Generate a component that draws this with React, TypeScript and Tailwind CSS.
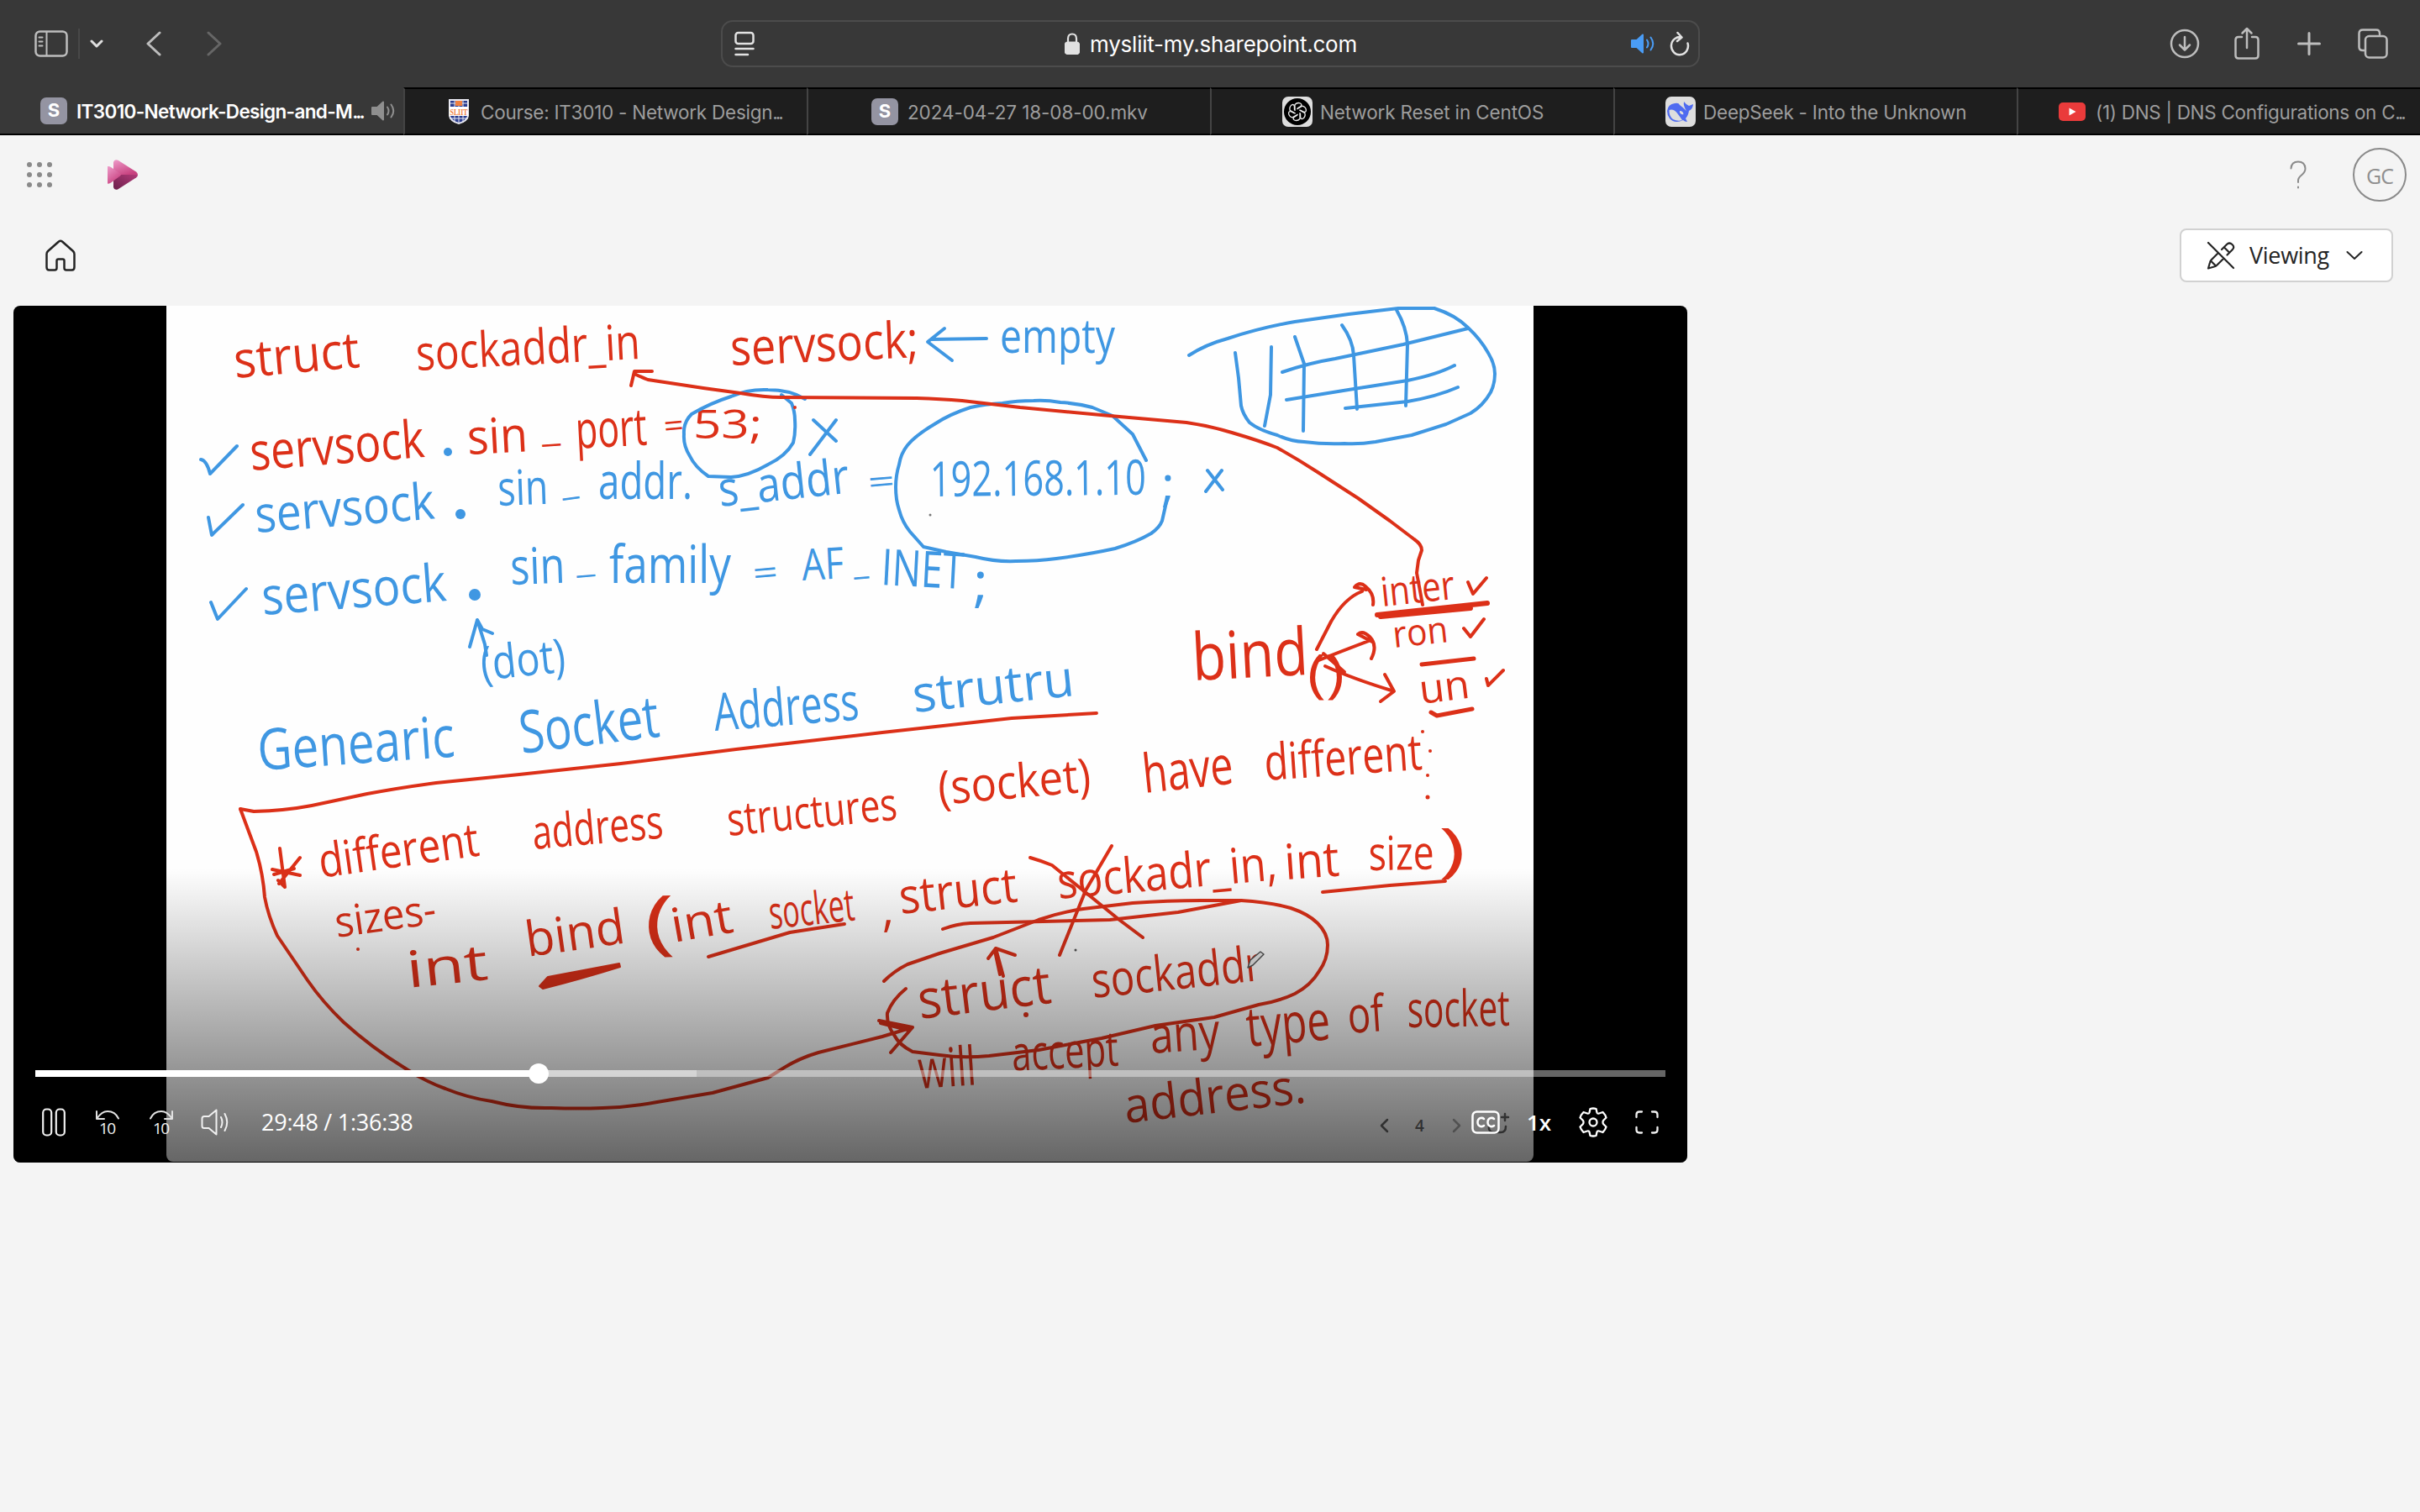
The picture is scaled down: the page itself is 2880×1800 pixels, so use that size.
import React from "react";

const RED = "#dc3018";
const BLUE = "#3f97e2";

type Word = [text: string, x: number, y: number, width: number, angle: number, size: number, color?: string];

const words: Word[] = [
  ["struct", 280, 450, 150, -5, 60],
  ["sockaddr_in", 496, 441, 267, -3, 58],
  ["servsock;", 870, 435, 224, -2.5, 60],
  ["empty", 1190, 420, 137, 0, 56, BLUE],
  ["servsock", 299, 560, 208, -4.4, 62],
  ["sin", 557, 541, 72, -3, 58],
  ["_", 645, 526, 22, -4, 40],
  ["port", 686, 534, 85, -3, 62],
  ["=", 791, 521, 24, -5, 38],
  ["53;", 825, 522, 82, 0, 48],
  ["servsock", 305, 634, 214, -4.5, 60, BLUE],
  ["sin", 593, 602, 60, -2, 58, BLUE],
  ["_", 669, 590, 20, -8, 40, BLUE],
  ["addr.", 712, 594, 112, 0, 60, BLUE],
  ["s_addr", 857, 603, 156, -6, 58, BLUE],
  ["=", 1034, 588, 32, -5, 38, BLUE],
  ["192.168.1.10", 1107, 591, 257, -0.5, 58, BLUE],
  [";", 1382, 596, 16, 0, 56, BLUE],
  ["servsock", 313, 732, 220, -4.4, 62, BLUE],
  ["sin", 608, 696, 65, -2, 60, BLUE],
  ["_", 686, 682, 22, -5, 40, BLUE],
  ["family", 725, 694, 145, 0, 62, BLUE],
  ["=", 897, 697, 30, -5, 40, BLUE],
  ["AF", 955, 691, 50, -3, 52, BLUE],
  ["_", 1016, 684, 18, -5, 40, BLUE],
  ["INET", 1048, 696, 98, 3, 60, BLUE],
  [";", 1158, 715, 18, 0, 64, BLUE],
  ["(dot)", 574, 810, 101, -6, 56, BLUE],
  ["Genearic", 308, 917, 235, -4, 68, BLUE],
  ["Socket", 621, 897, 167, -7, 70, BLUE],
  ["Address", 851, 870, 173, -4.5, 62, BLUE],
  ["strutru", 1088, 848, 193, -6, 60, BLUE],
  ["different", 382, 1045, 192, -8, 56],
  ["address", 635, 1011, 156, -5, 56],
  ["structures", 867, 995, 203, -5.5, 54],
  ["(socket)", 1118, 958, 182, -5, 56],
  ["have", 1362, 944, 108, -6, 64],
  ["different", 1506, 929, 188, -4, 60],
  ["sizes-", 401, 1116, 121, -8, 50],
  ["int", 486, 1176, 97, -6, 60],
  ["bind", 628, 1139, 119, -8, 58],
  ["(", 768, 1127, 36, -2, 84],
  ["int", 802, 1122, 74, -10, 56],
  ["socket", 917, 1106, 102, -6, 54],
  [",", 1050, 1102, 14, 0, 60],
  ["struct", 1072, 1088, 141, -6, 58],
  ["sockadr_in,", 1260, 1070, 262, -5, 58],
  ["int", 1530, 1047, 65, -4, 58],
  ["size", 1629, 1036, 78, -1, 56],
  [")", 1712, 1036, 32, 0, 70],
  ["struct", 1095, 1213, 159, -7, 64],
  ["sockaddr", 1301, 1188, 203, -6, 58],
  ["will", 1094, 1296, 69, -4, 64],
  ["accept", 1205, 1275, 127, -3, 58],
  ["any", 1370, 1254, 83, -4, 60],
  ["type", 1485, 1246, 100, -5, 66],
  ["of", 1605, 1230, 43, -4, 60],
  ["socket", 1675, 1223, 122, -1, 60],
  ["address.", 1340, 1337, 217, -6.5, 58],
  ["bind", 1420, 810, 138, -3, 78],
  ["()", 1556, 824, 44, 0, 62],
  ["inter", 1645, 722, 88, -6, 48],
  ["ron", 1659, 771, 66, -6, 44],
  ["un", 1691, 838, 60, -7, 48],
];

const redStrokes = [
  "M776 442L755 442L751 459M755 445Q763 449 771 452L837 462L881 468Q910 473 930 473L1091 474Q1120 475 1145 477L1214 485L1321 495L1412 503Q1440 507 1466 515Q1500 525 1520 533Q1545 547 1568 562L1616 593L1654 620L1683 642Q1692 648 1692 655L1688 667L1686 682L1693 720",
  "M286 963L302 966Q340 965 371 959L437 945Q480 937 519 932L618 922L739 909L876 892L1050 872L1204 855L1305 849",
  "M286 963L305 1014Q313 1040 315 1068Q319 1090 330 1114L366 1167Q384 1193 409 1217Q442 1247 481 1271Q505 1287 530 1296Q557 1307 585 1311Q620 1320 656 1319Q688 1320 717 1319Q750 1318 782 1312L848 1301L914 1283L930 1273Q950 1260 974 1253L1050 1234L1086 1223M1046 1215L1086 1223L1060 1253M1048 1218L1080 1226",
  "M333 1010L339 1056L331 1048M357 1021L332 1052M324 1035L357 1042M326 1041L350 1034",
  "M843 1139L940 1110L1005 1100",
  "M1574 1062L1654 1054L1720 1049",
  "M1226 1021Q1240 1025 1252 1030L1289 1060L1332 1095L1360 1116M1323 1007L1292 1060L1261 1137",
  "M1122 1106Q1138 1100 1155 1099L1241 1097L1321 1095L1402 1086L1477 1072",
  "M1052 1168Q1064 1156 1080 1148L1118 1135L1182 1116L1236 1095Q1262 1086 1289 1082L1348 1075Q1390 1072 1429 1072L1477 1072Q1512 1074 1536 1081Q1557 1088 1568 1099Q1580 1111 1580 1125Q1580 1142 1570 1156Q1560 1173 1541 1183Q1522 1192 1498 1196L1445 1211L1375 1221L1311 1236L1236 1250L1177 1257Q1145 1260 1118 1256L1086 1252Q1070 1244 1064 1232Q1055 1220 1056 1206Q1062 1190 1078 1177",
  "M1194 1162L1185 1129L1176 1141M1185 1129L1208 1137M1190 1160L1184 1132",
  "M1567 773L1584 740Q1600 712 1621 704M1612 699Q1618 692 1625 698Q1636 707 1634 720M1612 699L1626 702",
  "M1567 787Q1600 774 1629 763M1616 755Q1622 750 1630 758Q1640 768 1632 784M1616 755L1633 764",
  "M1575 778L1600 800M1577 793Q1610 808 1659 823M1648 803L1659 823L1643 835",
  "M1747 693L1753 707L1769 688M1742 748L1750 758L1766 737M1769 808L1771 816L1789 798",
];

const blueStrokes = [
  "M1174 403L1108 404M1124 391L1104 407L1133 429",
  "M239 547Q246 548 250 564L282 531M248 616L252 637L289 601M251 717L259 737L293 701",
  "M930 470L942 480Q946 490 946 500Q947 515 944 527Q935 543 914 553Q890 567 870 568L843 567Q827 556 821 543Q813 530 814 517Q813 503 823 493Q845 480 870 472Q890 463 914 464Q940 464 958 475",
  "M968 500L995 525M995 500L964 541M1437 560L1455 583M1454 560L1435 585",
  "M1364 548L1348 517L1324 495L1300 485Q1280 480 1262 479Q1245 476 1230 477Q1210 477 1193 480Q1172 481 1155 485Q1130 493 1112 505Q1090 518 1080 530Q1072 540 1070 553Q1066 566 1066 580Q1066 595 1070 607Q1074 622 1083 633L1099 651L1126 657L1161 663Q1185 669 1209 668Q1235 668 1257 665Q1295 660 1327 653Q1353 645 1370 635Q1380 628 1383 620L1388 598",
  "M579 780L577 767L568 738L559 770M568 738L574 749L586 754",
  "M1415 423Q1435 410 1461 403Q1500 390 1541 383L1605 374L1664 367L1707 367Q1732 375 1747 390Q1762 404 1771 420Q1779 433 1779 445Q1779 457 1774 467Q1765 483 1750 492L1721 505L1680 518L1637 526Q1618 529 1600 528Q1575 529 1552 526Q1535 525 1520 518Q1498 512 1487 503Q1479 493 1477 483L1474 450L1470 420",
  "M1513 413L1512 470L1505 507M1541 401L1552 433L1551 513M1597 387Q1610 405 1611 423L1615 487M1662 369Q1674 390 1675 410L1673 483",
  "M1526 443Q1558 432 1589 427L1670 410L1747 391M1531 476L1611 463L1675 453Q1710 446 1731 435M1601 486L1675 478Q1710 472 1735 461",
];

const dots: [number, number, number, string][] = [
  [533, 538, 5, BLUE], [548, 612, 6, BLUE], [565, 708, 7, BLUE], [946, 485, 2, RED],
  [1693, 871, 2, RED], [1702, 894, 2, RED], [1699, 923, 2, RED], [1699, 949, 2.5, RED],
  [426, 1130, 2, RED], [1221, 1208, 3, RED], [1107, 613, 1.5, "#777"], [1280, 1131, 1.5, "#555"],
];

function Whiteboard() {
  return (
    <svg viewBox="198 364 1627 1019" className="block h-[1019px] w-[1627px] rounded-b-lg bg-[#fefefe]" fill="none" strokeLinecap="round" strokeLinejoin="round">
      <g fontFamily='"Open Sans", sans-serif' fontWeight="400">
        {words.map(([t, x, y, w, a, s, c = RED], i) => (
          <text key={i} x={x} y={y} fontSize={s} fill={c} textLength={w} lengthAdjust="spacingAndGlyphs" transform={`rotate(${a} ${x} ${y})`}>{t}</text>
        ))}
      </g>
      <g stroke={BLUE} strokeWidth="4">{blueStrokes.map((d) => <path key={d} d={d} />)}</g>
      <g stroke={RED} strokeWidth="4">{redStrokes.map((d) => <path key={d} d={d} />)}</g>
      <path d="M642 1174L652 1163L737 1147L738 1151Q690 1166 646 1177Z" fill={RED} stroke={RED} strokeWidth="2" />
      <path d="M1639 732L1770 718M1643 734L1750 724" stroke={RED} strokeWidth="6" />
      <path d="M1692 791L1754 784M1703 848L1710 852L1752 844" stroke={RED} strokeWidth="5" />
      {dots.map(([x, y, r, c], i) => <circle key={i} cx={x} cy={y} r={r} fill={c} />)}
      <path d="M1485 1152L1488 1143L1500 1133L1504 1136L1491 1149Z" fill="#eee" stroke="#555" strokeWidth="1.5" />
      <g stroke="#666" strokeWidth="2.5">
        <path d="M1651 1333L1644 1340L1651 1347" />
        <path d="M1730 1333L1737 1340L1730 1347" stroke="#aaa" />
        <path d="M1791 1326V1334M1787 1330H1795M1772 1340V1344Q1773 1348 1778 1348H1786Q1792 1348 1792 1341" />
      </g>
      <text x="1684" y="1347" fontSize="19" fontWeight="600" fill="#666" fontFamily='"Open Sans", sans-serif'>4</text>
    </svg>
  );
}

function Ico({ w, h, className = "", children, sw = 2.5 }: { w: number; h: number; className?: string; children: React.ReactNode; sw?: number }) {
  return (
    <svg width={w} height={h} viewBox={`0 0 ${w} ${h}`} className={`shrink-0 ${className}`} fill="none" stroke="currentColor" strokeWidth={sw} strokeLinecap="round" strokeLinejoin="round">
      {children}
    </svg>
  );
}

function Speaker({ className }: { className: string }) {
  return (
    <Ico w={30} h={24} className={className} sw={2}>
      <path d="M1 8H7L14 1.5V22.5L7 16H1Z" fill="currentColor" />
      <path d="M19 7.5Q22 12 19 16.5M23.5 4.5Q29 12 23.5 19.5" />
    </Ico>
  );
}

function Toolbar() {
  return (
    <div className="flex h-[104px] items-center bg-[#383838] text-[#bdbdbd]">
      <Ico w={40} h={32} className="ml-[41px]">
        <rect x="1.5" y="1.5" width="37" height="29" rx="5" />
        <path d="M14.500 2V30M5.500 8.500H9.500M5.500 13.500H9.500M5.500 18.500H9.500" strokeWidth="2" />
      </Ico>
      <div className="ml-[12px] h-9 w-[2px] bg-[#484848]" />
      <Ico w={16} h={12} className="ml-[12px] text-[#e0e0e0]" sw={3}><path d="M2 3L8 9L14 3" /></Ico>
      <Ico w={18} h={30} className="ml-[51px]" sw={3}><path d="M16 2L2 15L16 28" /></Ico>
      <Ico w={18} h={30} className="ml-[54px] text-[#666]" sw={3}><path d="M2 2L16 15L2 28" /></Ico>
      <div className="ml-[594px] flex h-14 w-[1165px] items-center rounded-[14px] border-2 border-[#4c4c4c] text-[#e2e2e2]">
        <Ico w={24} h={30} className="ml-[14px]">
          <rect x="1.5" y="2" width="21" height="13" rx="3" />
          <path d="M1.500 21H22.500M1.500 28H16" />
        </Ico>
        <Ico w={18} h={26} className="ml-[369px]" sw={2.2}>
          <path d="M4 12V7Q4 1.500 9 1.500T14 7V12" />
          <rect x="1" y="11.500" width="16" height="13.500" rx="2.500" fill="currentColor" />
        </Ico>
        <span className="ml-[12px] w-[318px] whitespace-nowrap font-['Inter'] text-[26px] tracking-[-0.220px] text-white">mysliit-my.sharepoint.com</span>
        <Speaker className="ml-[326px] text-[#4a9cf5]" />
        <Ico w={24} h={30} className="ml-[16px]">
          <path d="M21.500 14.500A10 10.500 0 1 1 14.500 7.500L9.500 2M14.500 7.500L9 12" />
        </Ico>
      </div>
      <Ico w={36} h={36} className="ml-[559px]">
        <circle cx="18" cy="18" r="16" />
        <path d="M18 10V25M12 19.500L18 25.500L24 19.500" />
      </Ico>
      <Ico w={30} h={40} className="ml-[41px]">
        <path d="M9 12H5Q1.500 12 1.500 15.500V34Q1.500 37.500 5 37.500H25Q28.500 37.500 28.500 34V15.500Q28.500 12 25 12H21M15 25V2.500M9.500 7.500L15 2L20.500 7.500" />
      </Ico>
      <Ico w={28} h={28} className="ml-[45px]" sw={3}><path d="M14 1.500V26.500M1.500 14H26.500" /></Ico>
      <Ico w={36} h={36} className="ml-[44px]">
        <path d="M8 26H6Q1.500 26 1.500 22V6Q1.500 1.500 6 1.500H22Q26 1.500 26 6V7" />
        <rect x="9" y="9" width="25.500" height="25.500" rx="4.500" />
      </Ico>
    </div>
  );
}

function LetterIcon() {
  return <span className="flex h-8 w-8 shrink-0 items-center justify-center rounded-[7px] bg-[#9494a2] font-['Inter'] text-[22px] font-bold text-white">S</span>;
}

type TabProps = { icon: React.ReactNode; label: string; cut?: boolean; pad: string; gap: string; spacing: string; active?: boolean };

function Tab({ icon, label, cut, pad, gap, spacing, active }: TabProps) {
  return (
    <div className={`flex h-[57px] w-[480px] shrink-0 items-center whitespace-nowrap border-b-2 border-black font-['Inter'] text-[22.500px] ${pad} ${gap} ${active ? "bg-[#383838] font-semibold text-white" : "border-l-2 border-t-2 border-l-[#444] border-t-black bg-[#1e1e1e] text-[#9d9d9d]"}`}>
      {icon}
      <span className={`pt-[2px] ${spacing}`}>
        {label}
        {cut && <span className="tracking-[-3px]">...</span>}
      </span>
      {active && <Speaker className="text-[#8f8f8f]" />}
    </div>
  );
}

function TabBar() {
  return (
    <div className="flex h-[57px] overflow-hidden bg-[#1e1e1e]">
      <Tab active cut icon={<LetterIcon />} label="IT3010-Network-Design-and-M" pad="pl-[48px]" gap="gap-[11px]" spacing="w-[340px] tracking-[-0.640px]" />
      <Tab
        cut
        icon={
          <svg width="24" height="30" viewBox="0 0 24 30" className="shrink-0">
            <path d="M0 0H24V20Q23 27 12 30Q1 27 0 20Z" fill="#e9e9f2" />
            <path d="M2 2H22V20Q21 25 12 28Q3 25 2 20Z" fill="#2a3c8f" />
            <path d="M7 1V28M12 1V29M17 1V28M1 5H23M1 23H23" stroke="#e9e9f2" strokeWidth="1" />
            <rect x="8" y="2" width="8" height="6" fill="#f08040" />
            <rect x="1" y="9" width="22" height="11" fill="#fff" />
            <text x="1.500" y="19" fontSize="11" fontWeight="700" textLength="21" lengthAdjust="spacingAndGlyphs" fill="#f08040" fontFamily='"Liberation Serif", serif'>SLIIT</text>
          </svg>
        }
        label="Course: IT3010 - Network Design" pad="pl-[52px]" gap="gap-[14px]" spacing="tracking-[-0.250px]" />
      <Tab icon={<LetterIcon />} label="2024-04-27 18-08-00.mkv" pad="pl-[75px]" gap="gap-[11px]" spacing="tracking-[-0.100px]" />
      <Tab
        icon={
          <svg width="36" height="36" viewBox="0 0 36 36" className="shrink-0" fill="none">
            <rect width="36" height="36" rx="7" fill="#dedede" />
            <circle cx="18" cy="18" r="16" fill="#000" />
            <g stroke="#eee" strokeWidth="1.300">
              {[0, 60, 120, 180, 240, 300].map((a) => (
                <path key={a} d="M18 14L22 11.500Q24 9.500 21.500 8Q18 6.500 15 9.500V17" transform={`rotate(${a} 18 18)`} />
              ))}
            </g>
          </svg>
        }
        label="Network Reset in CentOS" pad="pl-[84px]" gap="gap-[9px]" spacing="tracking-[-0.150px]" />
      <Tab
        icon={
          <svg width="36" height="36" viewBox="0 0 36 36" className="shrink-0">
            <rect width="36" height="36" rx="7" fill="#dedede" />
            <path d="M2 17Q3 9 11 8Q16 7 17 10Q21 13 25 17Q21 11 22 6Q25 10 28 11L33 9Q33 14 28 17Q27 23 24 26L26 30Q23 30 21 28Q11 33 5 26Q2 22 2 17Z" fill="#4f6bf0" />
            <path d="M4.500 16Q10 14 15 21Q18 25 20 28Q15 30 9 27Q4 23 4.500 16ZM17 17Q21 17 21.500 21Q19 22 17 19Z" fill="#dedede" />
          </svg>
        }
        label="DeepSeek - Into the Unknown" pad="pl-[60px]" gap="gap-[9px]" spacing="tracking-[-0.220px]" />
      <Tab
        cut
        icon={
          <svg width="32" height="22" viewBox="0 0 32 22" className="shrink-0">
            <rect width="32" height="22" rx="5" fill="#ea3b3b" />
            <path d="M12.500 6.500L20.500 11L12.500 15.500Z" fill="#fff" />
          </svg>
        }
        label="(1) DNS | DNS Configurations on C" pad="pl-[48px]" gap="gap-[12px]" spacing="tracking-[-0.300px]" />
    </div>
  );
}

function AppHeader() {
  return (
    <header className="flex h-[94px] items-center">
      <div className="ml-8 grid grid-cols-3 gap-1.5">
        {Array.from({ length: 9 }, (_, i) => <span key={i} className="h-1.5 w-1.5 rounded-full bg-[#8a8a8a]" />)}
      </div>
      <svg width="37" height="36" viewBox="0 0 37 36" className="ml-[66px]">
        <defs>
          <linearGradient id="top" x1="0" y1="0" x2="0.6" y2="1"><stop stopColor="#ee9cca" /><stop offset="1" stopColor="#c8417f" /></linearGradient>
          <linearGradient id="low" x1="1" y1="0" x2="0" y2="1"><stop stopColor="#b23a78" /><stop offset="1" stopColor="#6b1f4b" /></linearGradient>
        </defs>
        <path d="M7 3Q8-1 12.500 0.700L34 14.500Q36 16 36 18H7Z" fill="url(#top)" />
        <path d="M7 33Q8 37 12.500 35.300L34 21.500Q36 20 36 18H7Z" fill="url(#low)" />
        <path d="M0 8Q2 7.500 4 9L15 16.500Q17 18 15 19.500L4 27.500Q2 29 0 28.500Z" fill="url(#top)" />
      </svg>
      <Ico w={20} h={34} className="ml-auto mr-[55px] text-[#8a8a8a]" sw={2}>
        <path d="M1.500 9.500Q2 1.500 10 1.500T18.500 9.500Q18.500 14 14 17.500T10 25V26M10 31.500V32.500" />
      </Ico>
      <div className="mr-4 flex h-16 w-16 items-center justify-center rounded-full border-2 border-[#8a8a8a] pt-1 font-['Open_Sans'] text-[25px] tracking-[-1px] text-[#8f8f8f]">GC</div>
    </header>
  );
}

function CommandBar() {
  return (
    <div className="flex h-[109px] items-center justify-between pb-[11px] pl-[54px] pr-8">
      <Ico w={36} h={38} className="text-[#242424]">
        <path d="M16 2.500Q18 1 20 2.500L33 14Q34.500 15.500 34.500 17.500V33Q34.500 36.500 31.500 36.500H25Q22.500 36.500 22.500 34V25.500Q22.500 23.500 20.500 23.500H15.500Q13.500 23.500 13.500 25.500V34Q13.500 36.500 11 36.500H4.500Q1.500 36.500 1.500 33V17.500Q1.500 15.500 3 14Z" />
      </Ico>
      <button className="flex h-16 w-[254px] items-center rounded-lg border-2 border-[#d1d1d1] bg-white pl-[30px] font-['Open_Sans'] text-[27px] text-[#242424]">
        <Ico w={34} h={34} sw={2.2}>
          <path d="M2 2L32 32M18 10L24 4Q27 1 30.500 4T30.500 10.500L24.500 16.500M21 7.500L27 13.500M14 14L6 22Q4.500 23.500 4 25.500L2 32.500L9 30.500Q11 30 12.500 28.500L20.500 20.500M5 23.500L11 29.500" />
        </Ico>
        <span className="ml-4 w-[97px] tracking-[-0.300px]">Viewing</span>
        <Ico w={20} h={12} className="ml-[19px]" sw={2}><path d="M1.500 2L10 10L18.500 2" /></Ico>
      </button>
    </div>
  );
}

function Skip({ flip, className }: { flip?: boolean; className: string }) {
  return (
    <svg width="30" height="32" viewBox="0 0 30 32" className={`shrink-0 ${className}`} fill="none" stroke="#e2e2e2" strokeWidth="2" strokeLinecap="round" strokeLinejoin="round">
      <path d="M2 3V12H11M2.500 11.500Q8 3 15 3Q24 3 28 11.500" transform={flip ? "translate(30 0) scale(-1 1)" : undefined} />
      <text x="5" y="30" fontSize="19" textLength="20" fill="#f0f0f0" stroke="none" fontFamily='"Open Sans", sans-serif'>10</text>
    </svg>
  );
}

function Player() {
  return (
    <section className="relative ml-4 h-[1020px] w-[1992px] overflow-hidden rounded-lg bg-black">
      <div className="pl-[182px]"><Whiteboard /></div>
      <div className="absolute inset-x-0 bottom-0 flex h-[350px] flex-col justify-end bg-gradient-to-b from-black/0 to-black/60 text-[#f0f0f0]">
        <div className="relative mx-[26px] h-2 bg-white/40">
          <div className="absolute left-0 top-0 h-2 w-[787px] bg-white/35" />
          <div className="absolute left-0 top-0 h-2 w-[599px] bg-white" />
          <div className="absolute -top-2 left-[587px] h-6 w-6 rounded-full bg-white" />
        </div>
        <div className="flex h-[102px] items-center pl-[34px] pt-[6px] font-['Open_Sans']">
          <Ico w={28} h={34} sw={2.2}>
            <rect x="1.200" y="1.500" width="10" height="31" rx="4" />
            <rect x="16.800" y="1.500" width="10" height="31" rx="4" />
          </Ico>
          <Skip className="ml-[35px]" />
          <Skip flip className="ml-[34px]" />
          <Ico w={34} h={34} className="ml-[32px]" sw={2}>
            <path d="M18.500 2.500V31.500L9.500 24H4Q1.500 24 1.500 21.500V12.500Q1.500 10 4 10H9.500ZM24 11Q27 17 24 23M28.500 7Q34 17 28.500 27" />
          </Ico>
          <span className="ml-[38px] w-[182px] whitespace-nowrap text-[27px] tracking-[-0.250px] text-white">29:48 / 1:36:38</span>
          <Ico w={34} h={28} className="ml-[1258px] text-white">
            <rect x="1.500" y="1.500" width="31" height="25" rx="5" />
            <path d="M15 10Q13.500 8.500 11 9Q7.500 10 7.500 14T11 19Q13.500 19.500 15 18M27 10Q25.500 8.500 23 9Q19.500 10 19.500 14T23 19Q25.500 19.500 27 18" />
          </Ico>
          <span className="ml-[32px] w-[26px] text-[26px] font-semibold text-white">1x</span>
          <Ico w={34} h={36} className="ml-[36px] text-white" sw={2.3}>
            <path d="M13.500 2Q17 1 20.500 2L21.500 6.500Q22 8 24 7.500L28.500 6Q31.500 9 32.500 12.500L29 16Q28 18 29 20L32.500 23.500Q31.500 27 28.500 30L24 28.500Q22 28 21.500 29.500L20.500 34Q17 35 13.500 34L12.500 29.500Q12 28 10 28.500L5.500 30Q2.500 27 1.500 23.500L5 20Q6 18 5 16L1.500 12.500Q2.500 9 5.500 6L10 7.500Q12 8 12.500 6.500Z" />
            <circle cx="17" cy="18" r="4.500" />
          </Ico>
          <Ico w={28} h={28} className="ml-[33px]" sw={2.3}>
            <path d="M1.500 8V5Q1.500 1.500 5 1.500H8M20 1.500H23Q26.500 1.500 26.500 5V8M26.500 20V23Q26.500 26.500 23 26.500H20M8 26.500H5Q1.500 26.500 1.500 23V20" />
          </Ico>
        </div>
      </div>
    </section>
  );
}

export default function App() {
  return (
    <div className="h-[1800px] w-[2880px] overflow-hidden bg-[#f4f4f4]">
      <Toolbar />
      <TabBar />
      <AppHeader />
      <CommandBar />
      <Player />
    </div>
  );
}
